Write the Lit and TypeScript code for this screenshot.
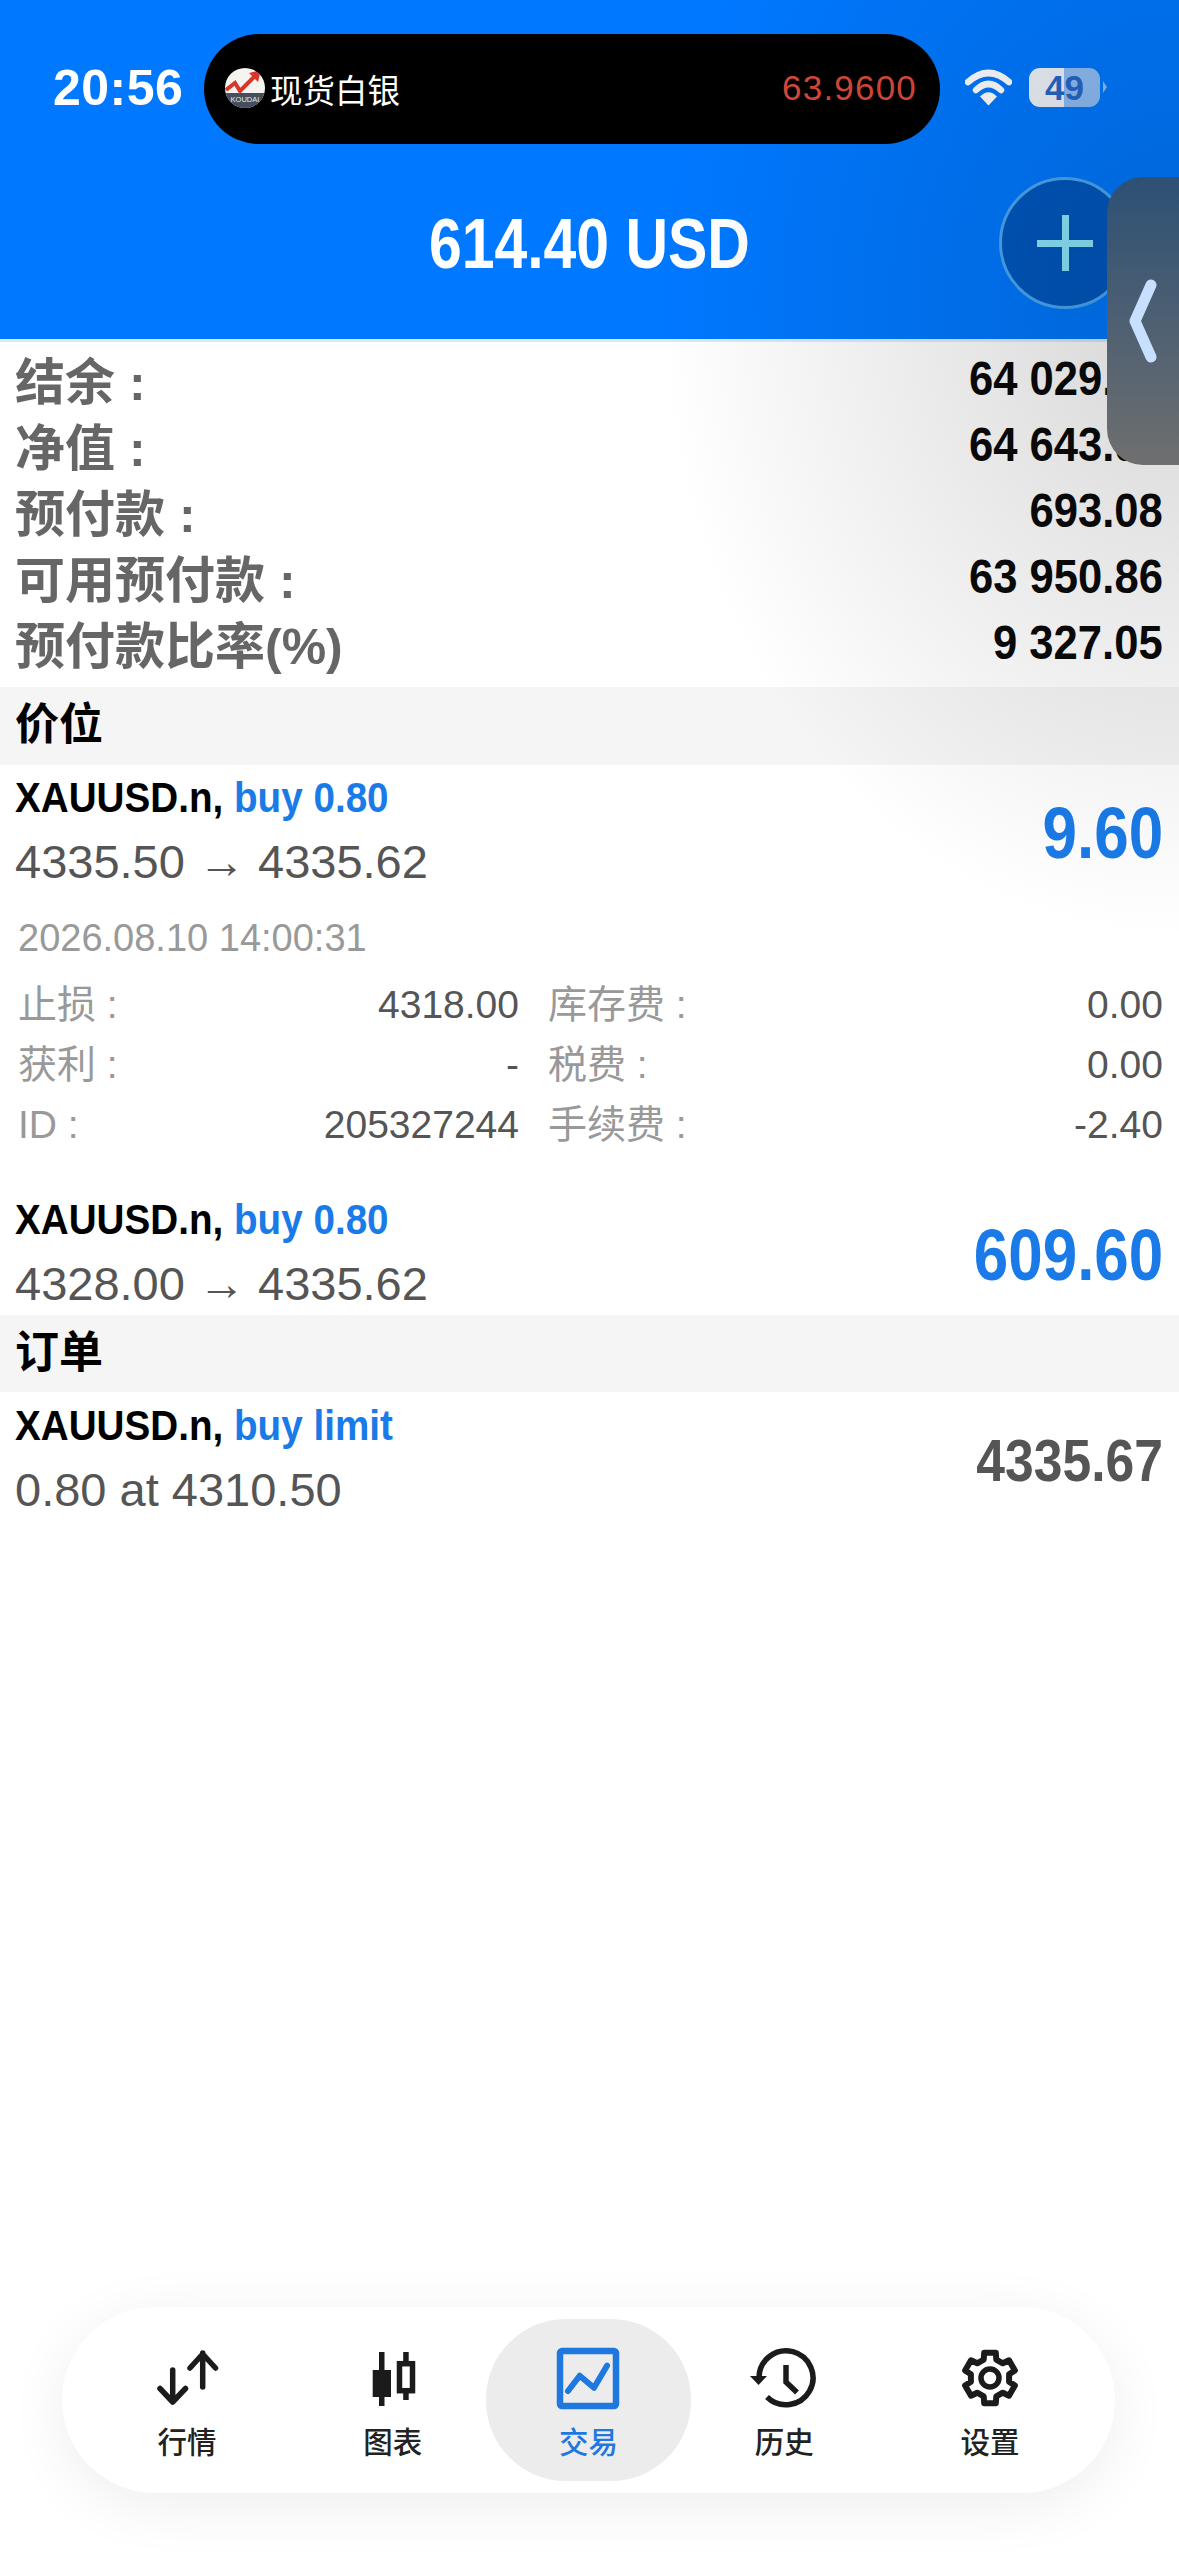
import { LitElement, html, css, svg } from "lit";
import { customElement } from "lit/decorators.js";

const gearPoints = (() => {
  const pts: string[] = [];
  const cx = 35, cy = 33, R = 26, r = 19.5;
  for (let k = 0; k < 6; k++) {
    const a = -90 + k * 60;
    for (const [da, rad] of [[-19, r], [-13, R], [13, R], [19, r]] as [number, number][]) {
      const t = ((a + da) * Math.PI) / 180;
      pts.push(`${(cx + rad * Math.cos(t)).toFixed(1)},${(cy + rad * Math.sin(t)).toFixed(1)}`);
    }
  }
  return pts.join(" ");
})();

const icons = {
  arrows: svg`<g fill="none" stroke="#1b1b1b" stroke-width="5.5" stroke-linecap="round" stroke-linejoin="round"><path d="M20.7 25V57M8 43.5L20.7 57L33.5 43.5"/><path d="M50.7 8V42M38 23L50.7 9L63.5 23"/></g>`,
  candles: svg`<g fill="#1b1b1b"><rect x="21" y="7" width="5.5" height="54"/><rect x="14.7" y="25" width="18.3" height="27"/><rect x="45.2" y="7" width="5.5" height="48"/></g><rect x="41.5" y="18.7" width="13" height="27" fill="#fff" stroke="#1b1b1b" stroke-width="5.5"/>`,
  chart: svg`<rect x="7" y="6" width="56" height="55" rx="2" fill="none" stroke="#1f78e0" stroke-width="6.5"/><path d="M15 46L26.7 30.7L41 42.7L54 20.7" fill="none" stroke="#1f78e0" stroke-width="6" stroke-linecap="round" stroke-linejoin="round"/>`,
  history: svg`<path d="M10 33A27 27 0 1 1 18 52" fill="none" stroke="#1b1b1b" stroke-width="5.5"/><path d="M1 31H18L9.5 40Z" fill="#1b1b1b"/><path d="M37 20V37L48 47.5" fill="none" stroke="#1b1b1b" stroke-width="5.5"/>`,
  gear: svg`<polygon points="${gearPoints}" fill="none" stroke="#1b1b1b" stroke-width="6" stroke-linejoin="round"/><circle cx="35" cy="33" r="9" fill="none" stroke="#1b1b1b" stroke-width="5.5"/>`,
};

const tabs = [
  { label: "行情", icon: icons.arrows },
  { label: "图表", icon: icons.candles },
  { label: "交易", icon: icons.chart, active: true },
  { label: "历史", icon: icons.history },
  { label: "设置", icon: icons.gear },
];

const summary = [
  ["结余 :", "64 029.26"],
  ["净值 :", "64 643.94"],
  ["预付款 :", "693.08"],
  ["可用预付款 :", "63 950.86"],
  ["预付款比率(%)", "9 327.05"],
];

const details = [
  ["止损 :", "4318.00", "库存费 :", "0.00"],
  ["获利 :", "-", "税费 :", "0.00"],
  ["ID :", "205327244", "手续费 :", "-2.40"],
];

@customElement("app-root")
export class AppRoot extends LitElement {
  static styles = css`
    :host {
      display: flex;
      flex-direction: column;
      position: relative;
      min-height: 2556px;
      width: 1179px;
      overflow: hidden;
      background: #fff;
      font-family: "Liberation Sans", "Noto Sans CJK SC", sans-serif;
      color: #555;
    }
    .header { background: #0078ff; height: 339px; border-bottom: 3px solid #d8ecff; flex: none; color: #fff; }
    .status { display: flex; align-items: center; padding: 34px 0 0 53px; }
    .time { font-size: 50px; font-weight: 700; width: 131px; letter-spacing: 0.5px; margin-top: -2px; }
    .island {
      width: 736px; height: 110px; margin-left: 20px; border-radius: 55px; background: #000;
      display: flex; align-items: center; justify-content: space-between; padding: 0 23px 0 21px; box-sizing: border-box;
    }
    .island-left { display: flex; align-items: center; gap: 5px; font-size: 32.5px; margin-top: -2px; }
    .island-price { color: #d9483b; font-size: 35px; letter-spacing: 1.2px; margin-top: -2px; }
    .wifi { margin-left: 25px; margin-top: -4px; display: block; }
    .battery {
      margin-left: 17px; margin-top: -4px; width: 71px; height: 39px; border-radius: 11px; position: relative;
      background: linear-gradient(90deg, #eef3fb 0 35px, #8fbdf5 35px);
      color: #2668c8; font-size: 35px; font-weight: 700; line-height: 39px; text-align: center;
    }
    .battery::after {
      content: ""; position: absolute; left: 74px; top: 13px; border-left: 4px solid #8fbdf5;
      border-top: 6px solid transparent; border-bottom: 6px solid transparent;
    }
    .title-row { height: 195px; padding: 3px 48px 0 0; box-sizing: border-box; display: grid; grid-template-columns: 1fr auto 1fr; align-items: center; }
    .title { grid-column: 2; font-size: 71px; font-weight: 700; white-space: nowrap; transform: scaleX(0.83); margin-left: 48px; }
    .plus {
      grid-column: 3; justify-self: end; width: 132px; height: 132px; box-sizing: border-box; border-radius: 50%;
      background: #0058c0; border: 3px solid #4aa8f5; position: relative;
    }
    .plus::before, .plus::after { content: ""; position: absolute; background: #8ee8ff; }
    .plus::before { left: 35px; right: 35px; top: 60px; height: 7px; }
    .plus::after { top: 35px; bottom: 35px; left: 60px; width: 7px; }

    .handle {
      position: absolute; left: 1107px; top: 177px; width: 72px; height: 288px; z-index: 3;
      border-radius: 36px 0 0 36px; background: linear-gradient(180deg, #2d5075 0%, #6f6f6f 100%);
      display: flex; align-items: center; justify-content: center;
    }
    .shade {
      position: absolute; left: 0; top: 0; right: 0; height: 1000px; z-index: 2; pointer-events: none;
      background: radial-gradient(ellipse 520px 640px at 1179px 300px, rgba(0, 0, 0, 0.16), rgba(0, 0, 0, 0) 100%);
    }

    .summary { padding: 3px 16px 12px 15px; }
    .sum-row { display: flex; justify-content: space-between; align-items: center; height: 66px; }
    .sum-label { font-size: 50px; font-weight: 700; color: #666; white-space: nowrap; }
    .sum-value { font-size: 49px; font-weight: 700; color: #0a0a0a; white-space: nowrap; transform: scaleX(0.89); transform-origin: right center; }

    .band { background: #f5f5f5; height: 78px; padding-left: 15px; font-size: 44px; font-weight: 700; color: #000; line-height: 76px; }
    .band.second { height: 77px; }

    .row { display: flex; justify-content: space-between; align-items: center; padding: 0 16px 0 15px; }
    .lines { flex: 1; }
    .sym { height: 64px; line-height: 64px; font-size: 42px; font-weight: 700; color: #000; white-space: nowrap; transform: scaleX(0.92); transform-origin: left center; }
    .sym b { color: #1a7be8; }
    .sub { height: 63px; line-height: 63px; font-size: 47px; color: #555; white-space: nowrap; }
    .val { font-size: 72px; font-weight: 700; color: #1a7be8; white-space: nowrap; transform: scaleX(0.86); transform-origin: right center; margin-top: 6px; }
    .val.gray { font-size: 60px; color: #555; }
    .first { padding-top: 1px; }
    .second-pos { margin-top: 33px; }
    .date { margin-top: 15px; padding-left: 18px; height: 60px; line-height: 60px; font-size: 38px; color: #999; }
    .details { margin-top: 7px; padding: 0 16px 0 18px; display: grid; grid-template-columns: 501px 1fr; column-gap: 29px; }
    .cell { display: flex; justify-content: space-between; height: 60px; line-height: 60px; font-size: 39px; color: #555; }
    .cell span:first-child { color: #999; }
    .orders { padding-top: 2px; }

    .nav {
      margin: auto 64px 63px 62px; height: 186px; border-radius: 93px; background: #fff; box-sizing: border-box;
      box-shadow: 0 12px 60px rgba(0, 0, 0, 0.07); padding: 12px 22px; display: flex; position: relative; z-index: 1;
    }
    .tab { flex: 1; display: flex; flex-direction: column; align-items: center; padding-top: 26px; box-sizing: border-box; border-radius: 80px; color: #222; }
    .tab.active { background: #ececec; color: #1f78e0; margin: 0 -10px; }
    .tab svg { display: block; }
    .tab span { margin-top: 10px; font-size: 29.5px; line-height: 36px; font-weight: 500; }
  `;

  private sym(kind: string) {
    return html`<div class="sym">XAUUSD.n, <b>${kind}</b></div>`;
  }

  render() {
    return html`
      <div class="shade"></div>
      <div class="handle">
        <svg width="30" height="84" viewBox="0 0 30 84"><path d="M23 6L7 42L23 78" fill="none" stroke="#c8e0ff" stroke-width="11" stroke-linecap="round" stroke-linejoin="round"/></svg>
      </div>
      <header class="header">
        <div class="status">
          <div class="time">20:56</div>
          <div class="island">
            <div class="island-left">
              <svg width="40" height="40" viewBox="0 0 40 40">
                <defs><clipPath id="lg"><circle cx="20" cy="20" r="20"/></clipPath></defs>
                <g clip-path="url(#lg)">
                  <rect width="40" height="40" fill="#f6f4f0"/>
                  <rect y="25" width="40" height="15" fill="#454e5e"/>
                  <path d="M1 22L10 15L15 23L30 8" fill="none" stroke="#d9362a" stroke-width="4"/>
                  <path d="M24 5L36 2L33 14Z" fill="#d9362a"/>
                  <text x="20" y="34" font-size="7.5" fill="#e8e8e8" text-anchor="middle" font-family="Liberation Sans">KOUDAI</text>
                </g>
              </svg>
              <span>现货白银</span>
            </div>
            <div class="island-price">63.9600</div>
          </div>
          <svg class="wifi" width="47" height="37" viewBox="0 0 47 37">
            <path d="M3 13Q23.5 -5 44 13" fill="none" stroke="#fff" stroke-width="6.5" stroke-linecap="round"/>
            <path d="M11 21Q23.5 9 36 21" fill="none" stroke="#fff" stroke-width="6.5" stroke-linecap="round"/>
            <path d="M15 27.500Q23.5 19 32 27.5L23.5 36.500Z" fill="#fff"/>
          </svg>
          <div class="battery">49</div>
        </div>
        <div class="title-row">
          <div class="title">614.40 USD</div>
          <div class="plus"></div>
        </div>
      </header>

      <section class="summary">
        ${summary.map(([l, v]) => html`<div class="sum-row"><div class="sum-label">${l}</div><div class="sum-value">${v}</div></div>`)}
      </section>

      <div class="band">价位</div>
      <div class="row first">
        <div class="lines">${this.sym("buy 0.80")}<div class="sub">4335.50 → 4335.62</div></div>
        <div class="val">9.60</div>
      </div>
      <div class="date">2026.08.10 14:00:31</div>
      <div class="details">
        ${details.map(([a, b, c, d]) => html`
          <div class="cell"><span>${a}</span><span>${b}</span></div>
          <div class="cell"><span>${c}</span><span>${d}</span></div>`)}
      </div>
      <div class="row second-pos">
        <div class="lines">${this.sym("buy 0.80")}<div class="sub">4328.00 → 4335.62</div></div>
        <div class="val">609.60</div>
      </div>
      <div class="band second">订单</div>
      <div class="row orders">
        <div class="lines">${this.sym("buy limit")}<div class="sub">0.80 at 4310.50</div></div>
        <div class="val gray">4335.67</div>
      </div>

      <nav class="nav">
        ${tabs.map((t) => html`
          <div class="tab ${t.active ? "active" : ""}">
            <svg width="70" height="70" viewBox="0 0 70 70">${t.icon}</svg>
            <span>${t.label}</span>
          </div>`)}
      </nav>
    `;
  }
}
